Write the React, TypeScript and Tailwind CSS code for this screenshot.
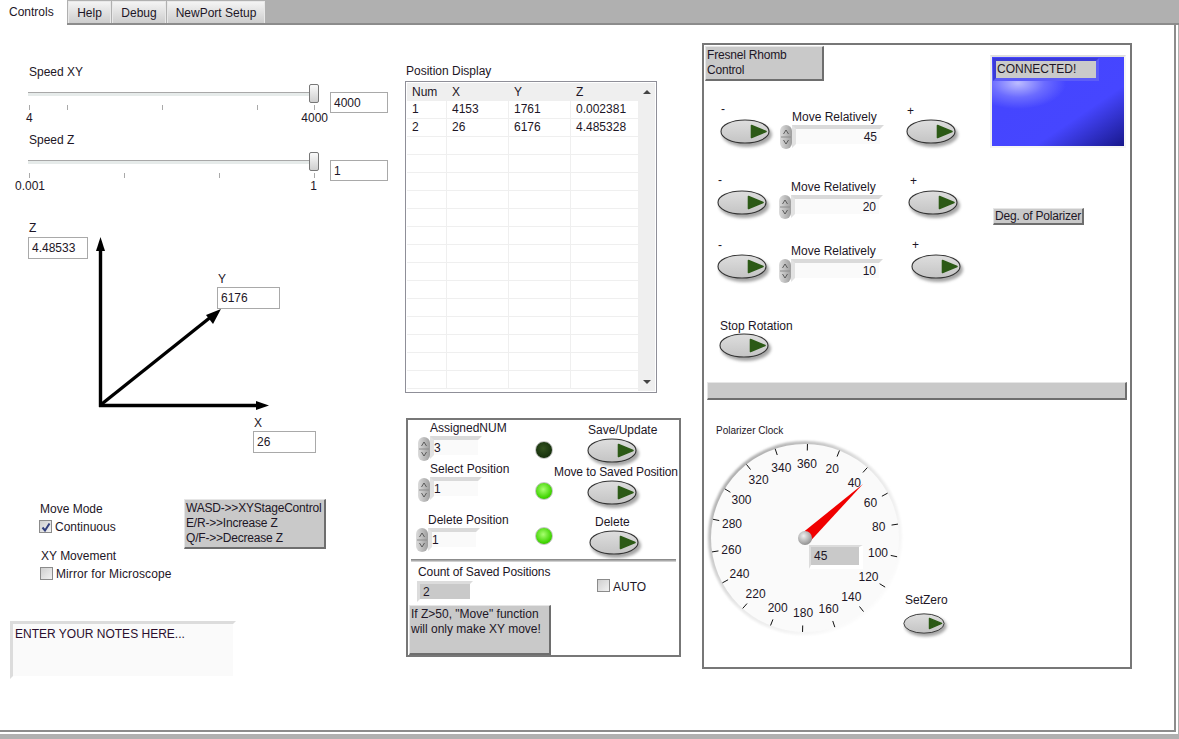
import type { ReactNode } from "react";

// LabVIEW front panel, three columns: speed and axes, saved positions, Fresnel rhomb.

const POSITIONS = [
  { num: "1", x: "4153", y: "1761", z: "0.002381" },
  { num: "2", x: "26", y: "6176", z: "4.485328" },
];
const EMPTY_ROWS = Array.from({ length: 14 }, (_, i) => i);
const CLOCK = Array.from({ length: 18 }, (_, i) => (i + 1) * 20);

const RELATIVE_ROWS = [
  { value: "45", row: "h-[71px]", a: "ml-[16px] w-[60px]", aBtn: "mt-[3px]", b: "w-[126px] pt-[8px]", c: "pt-[2px]", cLabel: "pl-[1px]", cBtn: "mt-[1px]" },
  { value: "20", row: "h-[65px]", a: "ml-[13px] w-[62px]", aBtn: "mt-[3px]", b: "w-[129px] pt-[7px]", c: "pt-[1px]", cLabel: "pl-[2px]", cBtn: "mt-[2px]" },
  { value: "10", row: "h-[81px]", a: "ml-[13px] w-[62px]", aBtn: "mt-[2px]", b: "w-[132px] pt-[6px]", c: "pt-0", cLabel: "pl-[1px]", cBtn: "mt-[2px]" },
];

function Label({ className = "", children }: { className?: string; children: ReactNode }) {
  return <span className={`block whitespace-nowrap text-[12px] leading-[14px] text-[#1d1626] ${className}`}>{children}</span>;
}

function BoolButton({ className = "", width = 56 }: { className?: string; width?: number }) {
  return (
    <svg className={`block shrink-0 ${className}`} width={width} height={(width * 34) / 56} viewBox="0 0 56 34" aria-hidden>
      <defs>
        <linearGradient id="btnFace" x1="0" y1="0" x2="0" y2="1">
          <stop offset="0%" stopColor="#dedede" />
          <stop offset="100%" stopColor="#c4c4c4" />
        </linearGradient>
        <filter id="btnBlur"><feGaussianBlur stdDeviation="1.7" /></filter>
        <clipPath id="btnClip"><ellipse cx="25" cy="12.5" rx="23.5" ry="10.5" /></clipPath>
      </defs>
      <ellipse cx="27" cy="15.5" rx="25" ry="12.5" fill="#a6a6a6" filter="url(#btnBlur)" />
      <ellipse cx="25" cy="12.5" rx="24" ry="11.5" fill="url(#btnFace)" stroke="#333" strokeWidth="1.1" />
      <path d="M31.5 6.5 L46 12.5 L31.5 18.5 Z" fill="#2c5a16" stroke="#2c5a16" strokeWidth="1.6" strokeLinejoin="round" clipPath="url(#btnClip)" />
    </svg>
  );
}

function Spinner({ className = "" }: { className?: string }) {
  return (
    <svg className={`block shrink-0 ${className}`} width="12" height="24" viewBox="0 0 12 24" aria-hidden>
      <defs>
        <linearGradient id="spinFace" x1="0" y1="0" x2="1" y2="0">
          <stop offset="0%" stopColor="#dcdcdc" />
          <stop offset="100%" stopColor="#9e9e9e" />
        </linearGradient>
      </defs>
      <rect x="0" y="0" width="12" height="24" rx="6" fill="url(#spinFace)" />
      <line x1="1" y1="12" x2="11" y2="12" stroke="#8c8c8c" />
      <path d="M3.5 9 L6 5 L8.5 9" fill="none" stroke="#444" strokeWidth="0.8" />
      <path d="M3.5 15 L6 19 L8.5 15" fill="none" stroke="#444" strokeWidth="0.8" />
    </svg>
  );
}

function NumField({ className = "", children }: { className?: string; children: ReactNode }) {
  return (
    <div className={`flex items-center border-[4px] border-t-[#dadada] border-l-[#e2e2e2] border-r-transparent border-b-transparent bg-[#fafafa] bg-clip-padding text-[12px] leading-[14px] text-[#1d1626] ${className}`}>
      {children}
    </div>
  );
}

function BoxedValue({ className = "", children }: { className?: string; children: ReactNode }) {
  return (
    <div className={`flex items-center border border-[#a9a9a9] bg-white pl-[3px] text-[12px] text-[#1d1626] ${className}`}>
      {children}
    </div>
  );
}

function GrayNote({ className = "", children }: { className?: string; children: ReactNode }) {
  return (
    <div className={`whitespace-nowrap border-r-2 border-b-2 border-t border-l border-r-[#6e6e6e] border-b-[#6e6e6e] border-t-[#e6e6e6] border-l-[#e6e6e6] bg-[#c9c9c9] text-[12px] leading-[15px] text-[#1d1626] ${className}`}>
      {children}
    </div>
  );
}

function Check({ checked }: { checked?: boolean }) {
  return (
    <div className="flex h-[13px] w-[13px] shrink-0 items-center justify-center border border-[#8b8b8b] bg-gradient-to-br from-[#cfcfcf] to-[#f2f2f2]">
      {checked && (
        <svg width="10" height="10" viewBox="0 0 10 10" aria-hidden>
          <path d="M1.5 5.5 L4 8.5 L8.5 1.5" fill="none" stroke="#33407e" strokeWidth="2" />
        </svg>
      )}
    </div>
  );
}

function Led({ className = "", on }: { className?: string; on?: boolean }) {
  return (
    <div
      className={`h-[18px] w-[18px] shrink-0 rounded-full border border-[#c4c4c4] ${on ? "bg-[radial-gradient(circle_at_45%_40%,#a8ff70,#3fd400_65%,#2f9a08)]" : "bg-[radial-gradient(circle_at_45%_40%,#33521f,#16300c_70%,#0d1f08)]"} ${className}`}
    />
  );
}

function Slider({ label, ticks, value, from, to, scale, scaleMargin }: {
  label: string; ticks: number[]; value: string; from: string; to: string; scale: string; scaleMargin: string;
}) {
  return (
    <div className="ml-[28px] flex flex-col">
      <Label className="pl-[1px]">{label}</Label>
      <div className="mt-[5px] flex h-[29px]">
        <div className="relative w-[302px]">
          <div className="mt-[8px] h-[4px] w-[288px] border-t border-[#a8a8a8] bg-[#e6ebea]" />
          <div className="absolute left-[281px] top-0 h-[19px] w-[10px] rounded-[2px] border border-[#777] bg-gradient-to-b from-[#fafafa] to-[#cfcfcf]" />
          <svg className="absolute left-0 top-[21px]" width="290" height="5" aria-hidden>
            {ticks.map(x => <line key={x} x1={x + 0.5} y1="0" x2={x + 0.5} y2="5" stroke="#a9a9a9" />)}
          </svg>
        </div>
        <BoxedValue className="mt-[8px] h-[21px] w-[58px]">{value}</BoxedValue>
      </div>
      <div className={`flex justify-between ${scale} ${scaleMargin}`}>
        <Label>{from}</Label>
        <Label>{to}</Label>
      </div>
    </div>
  );
}

function AxesDiagram() {
  return (
    <div className="relative ml-[28px] mt-[28px] h-[232px]">
      <svg className="absolute left-[62px] top-[9px]" width="195" height="185" viewBox="0 0 195 185" aria-hidden>
        <g stroke="#000" strokeWidth="3.4" fill="none">
          <line x1="10.5" y1="177" x2="10.5" y2="18" />
          <line x1="9" y1="175.5" x2="168" y2="175.5" />
          <line x1="10.5" y1="175" x2="122" y2="86" />
        </g>
        <path d="M10.5 7 L15 21 L6 21 Z" fill="#000" />
        <path d="M179 175.5 L166 171 L166 180 Z" fill="#000" />
        <path d="M131 79 L116 85 L123 94 Z" fill="#000" />
      </svg>
      <div className="absolute left-0 top-0 flex flex-col gap-[2px]">
        <Label className="pl-[1px]">Z</Label>
        <BoxedValue className="h-[22px] w-[60px]">4.48533</BoxedValue>
      </div>
      <div className="absolute left-[189px] top-[51px] flex flex-col gap-[1px]">
        <Label className="pl-[1px]">Y</Label>
        <BoxedValue className="h-[22px] w-[63px]">6176</BoxedValue>
      </div>
      <div className="absolute left-[225px] top-[195px] flex flex-col gap-[1px]">
        <Label className="pl-[1px]">X</Label>
        <BoxedValue className="h-[22px] w-[63px]">26</BoxedValue>
      </div>
    </div>
  );
}

function LeftColumn() {
  return (
    <div className="flex w-[405px] shrink-0 flex-col pt-[40px]">
      <Slider label="Speed XY" ticks={[1, 39, 134, 229, 286]} value="4000" from="4" to="4000" scale="w-[302px]" scaleMargin="-ml-[2px] -mt-[2px]" />
      <div className="mt-[8px]">
        <Slider label="Speed Z" ticks={[1, 96, 191, 286]} value="1" from="0.001" to="1" scale="w-[302px]" scaleMargin="-ml-[13px] -mt-[2px]" />
      </div>
      <AxesDiagram />

      <div className="mt-[46px] flex h-[82px]">
        <div className="ml-[39px] flex w-[145px] flex-col pt-[3px]">
          <Label className="pl-[1px]">Move Mode</Label>
          <div className="mt-[4px] flex gap-[3px]">
            <Check checked />
            <Label>Continuous</Label>
          </div>
          <Label className="mt-[15px] pl-[2px]">XY Movement</Label>
          <div className="mt-[4px] flex gap-[3px] pl-[1px]">
            <Check />
            <Label className="tracking-[0.1px]">Mirror for Microscope</Label>
          </div>
        </div>
        <GrayNote className="h-[50px] w-[142px] pl-[1px] pt-[1px] tracking-[-0.2px]">
          <div>WASD-&gt;&gt;XYStageControl</div>
          <div>E/R-&gt;&gt;Increase Z</div>
          <div>Q/F-&gt;&gt;Decrease Z</div>
        </GrayNote>
      </div>

      <div className="ml-[10px] mt-[40px] h-[58px] w-[226px] border-[3px] border-t-[#dcdcdc] border-l-[#dcdcdc] border-r-transparent border-b-transparent bg-[#fafafa] bg-clip-padding pl-[2px] pt-[3px] text-[12px] leading-[14px] text-[#2a0f2e]">
        ENTER YOUR NOTES HERE...
      </div>
    </div>
  );
}

function PositionTable() {
  const cols = "grid h-[18px] grid-cols-[40px_62px_62px_68px]";
  return (
    <div className="mt-[3px] flex h-[312px] w-[252px] border border-[#8f8f98] bg-white p-[1px] text-[12px] leading-[14px] text-[#1d1626]">
      <div className="flex min-w-0 flex-1 flex-col">
        <div className={`${cols} items-center bg-[#efefef]`}>
          <span className="pl-[5px]">Num</span>
          <span className="pl-[5px]">X</span>
          <span className="pl-[5px]">Y</span>
          <span className="pl-[5px]">Z</span>
        </div>
        {POSITIONS.map(p => (
          <div key={p.num} className={`${cols} border-b border-[#efefef]`}>
            <span className="h-full border-r border-[#efefef] pl-[5px] leading-[17px]">{p.num}</span>
            <span className="h-full border-r border-[#efefef] pl-[5px] leading-[17px]">{p.x}</span>
            <span className="h-full border-r border-[#efefef] pl-[5px] leading-[17px]">{p.y}</span>
            <span className="h-full pl-[5px] leading-[17px]">{p.z}</span>
          </div>
        ))}
        {EMPTY_ROWS.map(i => (
          <div key={i} className={`${cols} border-b border-[#efefef]`}>
            <span className="border-r border-[#efefef]" />
            <span className="border-r border-[#efefef]" />
            <span className="border-r border-[#efefef]" />
            <span />
          </div>
        ))}
      </div>
      <div className="flex w-[17px] flex-col items-center justify-between bg-[#efefef] py-[7px]">
        <div className="h-0 w-0 border-x-[4px] border-b-[4px] border-x-transparent border-b-[#444]" />
        <div className="h-0 w-0 border-x-[4px] border-t-[4px] border-x-transparent border-t-[#444]" />
      </div>
    </div>
  );
}

function NumericControl({ label, value, labelMargin = "", spinMargin = "-mb-[1px] mt-[1px]" }: {
  label: string; value: string; labelMargin?: string; spinMargin?: string;
}) {
  return (
    <div className="flex w-[64px] shrink-0 flex-col">
      <Label className={`pl-[12px] ${labelMargin}`}>{label}</Label>
      <div className="mt-[1px] flex">
        <Spinner className={spinMargin} />
        <NumField className="h-[23px] w-[52px] shrink-0">{value}</NumField>
      </div>
    </div>
  );
}

function SavedPositionsPanel() {
  return (
    <div className="ml-[1px] mt-[25px] flex h-[239px] w-[275px] flex-col border-2 border-[#777] pt-[1px]">
      <div className="flex h-[41px] pl-[10px]">
        <NumericControl label="AssignedNUM" value="3" />
        <Led className="ml-[53px] mt-[20px]" />
        <div className="flex flex-col pt-[2px]">
          <Label className="pl-[35px]">Save/Update</Label>
          <BoolButton className="ml-[34px] mt-[1px]" />
        </div>
      </div>
      <div className="flex h-[51px] pl-[10px]">
        <NumericControl label="Select Position" value="1" />
        <Led className="ml-[53px] mt-[20px]" on />
        <div className="flex flex-col pt-[3px]">
          <Label className="pl-[1px] tracking-[-0.1px]">Move to Saved Position</Label>
          <BoolButton className="ml-[34px] mt-[1px]" />
        </div>
      </div>
      <div className="flex h-[46px] pl-[8px]">
        <NumericControl label="Delete Position" value="1" spinMargin="" />
        <Led className="ml-[55px] mt-[14px]" on />
        <div className="flex flex-col pt-[2px]">
          <Label className="pl-[42px]">Delete</Label>
          <BoolButton className="ml-[36px] mt-[1px]" />
        </div>
      </div>
      <div className="ml-[3px] h-[3px] w-[265px] shrink-0 border-y border-t-[#8c8c8c] border-b-[#d0d0d0] bg-[#aaa]" />
      <div className="flex h-[43px] shrink-0">
        <div className="ml-[9px] w-[180px] pt-[3px]">
          <Label className="pl-[1px] tracking-[-0.1px]">Count of Saved Positions</Label>
          <div className="mt-[2px] flex h-[21px] w-[56px] items-center border-[3px] border-t-[#dcdcdc] border-l-[#dcdcdc] border-r-transparent border-b-transparent bg-[#c9c9c9] bg-clip-padding pl-[3px] text-[12px] text-[#1d1626]">2</div>
        </div>
        <div className="flex gap-[3px] pt-[17px]">
          <Check />
          <Label className="mt-[1px]">AUTO</Label>
        </div>
      </div>
      <GrayNote className="ml-[1px] h-[50px] w-[142px] pl-[1px] pt-[1px]">
        <div>If Z&gt;50, "Move" function</div>
        <div>will only make XY move!</div>
      </GrayNote>
    </div>
  );
}

function MiddleColumn() {
  return (
    <div className="flex w-[297px] shrink-0 flex-col pt-[39px]">
      <Label className="ml-[1px]">Position Display</Label>
      <PositionTable />
      <SavedPositionsPanel />
    </div>
  );
}

function Clock() {
  const cx = 100, cy = 100, off = 1.5;
  const pt = (deg: number, r: number) => {
    const a = ((deg + off) * Math.PI) / 180;
    return { x: cx + r * Math.sin(a), y: cy - r * Math.cos(a) };
  };
  return (
    <div className="relative ml-[1px] h-[200px] w-[200px] shrink-0">
      <svg className="block font-['Liberation_Sans',sans-serif]" width="200" height="200" viewBox="0 0 200 200" aria-hidden>
        <defs>
          <linearGradient id="clockRim" x1="0.1" y1="0.1" x2="0.9" y2="0.9">
            <stop offset="0%" stopColor="#a6a6a6" />
            <stop offset="50%" stopColor="#e8e8e8" />
            <stop offset="100%" stopColor="#ffffff" />
          </linearGradient>
          <radialGradient id="clockHub" cx="40%" cy="35%" r="70%">
            <stop offset="0%" stopColor="#efefef" />
            <stop offset="100%" stopColor="#8b8b8b" />
          </radialGradient>
          <filter id="rimBlur"><feGaussianBlur stdDeviation="1.2" /></filter>
        </defs>
        <circle cx={cx} cy={cy} r="97" fill="url(#clockRim)" filter="url(#rimBlur)" />
        <circle cx={cx} cy={cy} r="94" fill="#fafafa" />
        {CLOCK.map(v => {
          const a = pt(v, 87.5), b = pt(v, 94);
          const t = pt(v, 74.5);
          return (
            <g key={v}>
              <line x1={a.x} y1={a.y} x2={b.x} y2={b.y} stroke="#111" strokeWidth="1" />
              <text x={t.x} y={t.y + 4.5} textAnchor="middle" fontSize="12" fill="#1d1626">{v}</text>
            </g>
          );
        })}
        <polygon points="158,46 104.5,104 96,96" fill="#f00000" />
        <circle cx={cx} cy={cy} r="7" fill="url(#clockHub)" />
      </svg>
      <div className="absolute left-[104px] top-[107px] flex h-[24px] w-[54px] items-center border-r-[4px] border-b-[4px] border-t-2 border-l-2 border-r-white border-b-white border-t-[#dcdcdc] border-l-[#dcdcdc] bg-[#c9c9c9] pl-[3px] text-[12px] text-[#1d1626]">45</div>
    </div>
  );
}

function FresnelPanel() {
  return (
    <div className="mt-[18px] flex h-[626px] w-[430px] shrink-0 flex-col border-2 border-[#777]">
      <div className="flex h-[337px] shrink-0">
        <div className="flex w-[286px] shrink-0 flex-col pt-[1px]">
          <GrayNote className="ml-[1px] h-[35px] w-[119px] pl-[1px] pt-[1px] tracking-[-0.2px]">
            <div>Fresnel Rhomb</div>
            <div>Control</div>
          </GrayNote>
          <div className="mt-[21px] flex flex-col">
            {RELATIVE_ROWS.map(r => (
              <div key={r.value} className={`flex ${r.row}`}>
                <div className={`shrink-0 ${r.a}`}>
                  <Label className="pl-[1px]">-</Label>
                  <BoolButton className={r.aBtn} />
                </div>
                <div className={`shrink-0 ${r.b}`}>
                  <Label className="pl-[12px]">Move Relatively</Label>
                  <div className="mt-[1px] flex">
                    <Spinner />
                    <NumField className="h-[23px] w-[92px] justify-end pr-[3px]">{r.value}</NumField>
                  </div>
                </div>
                <div className={`w-[56px] shrink-0 ${r.c}`}>
                  <Label className={r.cLabel}>+</Label>
                  <BoolButton className={r.cBtn} />
                </div>
              </div>
            ))}
          </div>
          <div className="ml-[15px] flex flex-col">
            <Label className="pl-[1px]">Stop Rotation</Label>
            <BoolButton />
          </div>
        </div>
        <div className="flex flex-col pt-[10px]">
          <div className="h-[93px] w-[136px] border-2 border-t-[#dedede] border-l-[#f0f0f0] border-r-[#f6f6f6] border-b-[#f6f6f6] bg-[radial-gradient(ellipse_48px_26px_at_26px_26px,#bcbcff_0%,#6c6cff_55%,transparent_100%),linear-gradient(to_bottom_right,#4444ff_0%,#4646ff_66%,#18188c_100%)] bg-clip-padding p-[1px]">
            <div className="h-[23px] w-[106px] border-[3px] border-t-[#3a3ad8] border-l-[#3a3ad8] border-r-[#5c5cf8] border-b-[#5c5cf8] bg-[#cacaca] pl-[1px] text-[12px] leading-[16px] text-[#1d1626]">CONNECTED!</div>
          </div>
          <GrayNote className="ml-[3px] mt-[60px] h-[17px] w-[91px] pl-[1px] tracking-[-0.2px]">Deg. of Polarizer</GrayNote>
        </div>
      </div>

      <div className="ml-[3px] h-[18px] w-[420px] shrink-0 border-t border-l border-r-2 border-b-2 border-t-[#e6e6e6] border-l-[#e6e6e6] border-r-[#6e6e6e] border-b-[#6e6e6e] bg-[#c9c9c9]" />

      <span className="ml-[12px] mt-[24px] block whitespace-nowrap text-[10px] leading-[14px] text-[#1d1626]">Polarizer Clock</span>
      <div className="flex">
        <Clock />
        <div className="flex flex-col pt-[155px]">
          <Label>SetZero</Label>
          <BoolButton className="-ml-[2px] mt-[6px]" width={47} />
        </div>
      </div>
    </div>
  );
}

export default function App() {
  return (
    <div className="flex h-[739px] w-[1179px] flex-col overflow-hidden bg-[#b0b0b0] font-['Liberation_Sans',sans-serif]">
      {/* Onglets */}
      <div className="flex h-[25px] shrink-0 items-stretch text-[12px] text-[#1d1626]">
        <div className="flex w-[67px] items-start bg-white pl-[9px] pt-[3px]">Controls</div>
        <div className="flex flex-1 items-stretch gap-[1px] border-b-2 border-[#8c8c8c] pt-[1px]">
          <div className="ml-[1px] flex w-[43px] items-center justify-center border-x border-t border-[#e8e8e8] bg-gradient-to-b from-[#f4f4f4] to-[#cdcdcd]">Help</div>
          <div className="flex w-[54px] items-center justify-center border-x border-t border-[#e8e8e8] bg-gradient-to-b from-[#f4f4f4] to-[#cdcdcd]">Debug</div>
          <div className="flex w-[98px] items-center justify-center border-x border-t border-[#e8e8e8] bg-gradient-to-b from-[#f4f4f4] to-[#cdcdcd]">NewPort Setup</div>
        </div>
      </div>

      {/* Page */}
      <div className="mb-[5px] mr-[1px] flex min-h-0 flex-1 bg-white pb-[2px] pr-[2px]">
        <div className="flex min-w-0 flex-1 border-r-2 border-b-2 border-[#8c8c8c]">
          <LeftColumn />
          <MiddleColumn />
          <FresnelPanel />
        </div>
      </div>
    </div>
  );
}
